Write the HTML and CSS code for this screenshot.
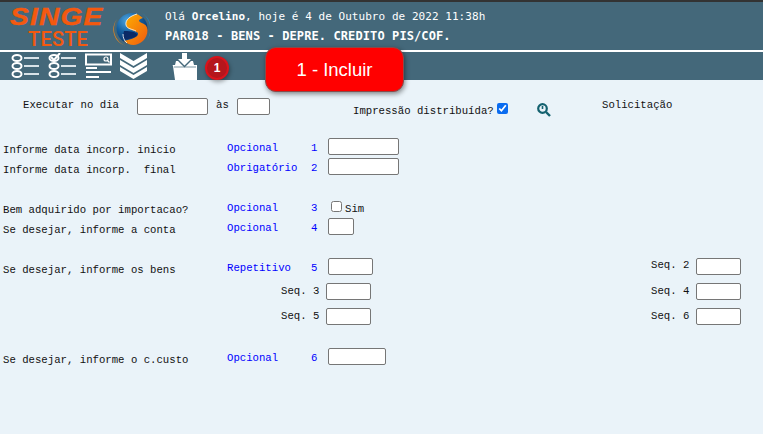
FILE: index.html
```html
<!DOCTYPE html>
<html lang="pt">
<head>
<meta charset="utf-8">
<title>PAR018</title>
<link rel="stylesheet" href="styles.css">
</head>
<body>
<header class="head">
  <div class="brand">
    <div class="brand-name">SINGE</div>
    <div class="brand-sub">TESTE</div>
  </div>
  <svg class="globe" width="38" height="38" viewBox="0 0 38 38">
    <defs>
      <radialGradient id="gb" cx="35%" cy="25%" r="80%"><stop offset="0" stop-color="#4fa6e0"/><stop offset=".5" stop-color="#145f9f"/><stop offset="1" stop-color="#0b2f66"/></radialGradient>
      <linearGradient id="go" x1="0" y1="0" x2="1" y2="1"><stop offset="0" stop-color="#ffb000"/><stop offset="1" stop-color="#ee5a10"/></linearGradient>
    </defs>
    <path d="M5 9A18 18 0 0 0 14 36A17 17 0 0 1 5 9Z" fill="#e8861e"/>
    <path d="M30 3A18 18 0 0 1 35 30A20 20 0 0 0 30 3Z" fill="#2b7fb8"/>
    <circle cx="20" cy="18.500" r="15.500" fill="url(#gb)"/>
    <path d="M25 4C18 6 13 10 14 15C15 20 23 20 26 23C27 27 20 29 12 31C16 35 22 36 26 34C32 32 35.500 26 35.500 20C35 14 31 14 28 12C26 11 27 9 31 8C29 6 27 5 25 4Z" fill="url(#go)"/>
    <path d="M12 21C16 21 22 21 25 24C26 27 20 28 12 30C11 27 11 24 12 21Z" fill="#0a2a66"/>
    <path d="M25 4C18 6 13 10 14 15C15 19 20 19 24 21M11 24C11 27 12 31 15 33" fill="none" stroke="#fff" stroke-width=".8"/>
  </svg>
  <div class="greet">
    <div class="greet-line">Olá <b>Orcelino</b>, hoje é 4 de Outubro de 2022 11:38h</div>
    <div class="greet-title">PAR018 - BENS - DEPRE. CREDITO PIS/COF.</div>
  </div>
</header>
<nav class="tools">
  <svg class="ico" width="30" height="26" viewBox="0 0 30 26" fill="none" stroke="#fff" stroke-width="2">
    <ellipse cx="6" cy="5" rx="4.500" ry="3"/><ellipse cx="6" cy="13" rx="4.500" ry="3"/><ellipse cx="6" cy="21" rx="4.500" ry="3"/>
    <path d="M13 5H28M13 13H28M13 21H28" stroke="#d8e2e8"/>
  </svg>
  <svg class="ico" width="30" height="26" viewBox="0 0 30 26" fill="none" stroke="#fff" stroke-width="2">
    <ellipse cx="6" cy="5" rx="4.500" ry="3"/><ellipse cx="6" cy="13" rx="4.500" ry="3"/><ellipse cx="6" cy="21" rx="4.500" ry="3"/>
    <path d="M3 4L6 7L12 0"/>
    <path d="M13 5H28M13 13H28M13 21H28" stroke="#d8e2e8"/>
  </svg>
  <svg class="ico" width="28" height="26" viewBox="0 0 28 26" fill="none" stroke="#fff">
    <rect x="1" y="1.500" width="25" height="10" stroke-width="2"/>
    <circle cx="21" cy="6" r="2" stroke-width="1.200"/><path d="M22.500 7.500L24.500 9.500" stroke-width="1.200"/>
    <path d="M1 15H12M1 19H26M1 24H14" stroke-width="2"/>
  </svg>
  <svg class="ico" width="27" height="26" viewBox="0 0 27 26" fill="#fff">
    <path d="M0 0L13.500 8L27 0V5L13.500 13L0 5Z"/>
    <path d="M0 7L13.500 15L27 7V12L13.500 20L0 12Z"/>
    <path d="M0 14L13.500 22L27 14V18L13.500 26L0 18Z"/>
  </svg>
  <svg class="ico ico-in" width="26" height="27" viewBox="0 0 26 27" fill="#fff">
    <path d="M10 0H15V6H19L12.500 12.500L6 6H10Z"/>
    <path d="M4 8H6L12.500 14.500L19 8H21L22 12H25V27H3L1 13L0.500 12H3Z"/>
    <path d="M2 14H24" stroke="#44687a" stroke-width=".7"/>
  </svg>
  <span class="badge">1</span>
</nav>
<div class="tip">1 - Incluir</div>
<main class="form">
  <div class="exec">
    <span class="exec-label">Executar no dia</span>
    <input class="in w71" type="text">
    <span class="as">às</span>
    <input class="in w33" type="text">
    <span class="dist">Impressão distribuída?</span>
    <input class="chk" type="checkbox" checked>
    <svg class="lens" width="14" height="14" viewBox="0 0 14 14" fill="none" stroke="#14616f">
      <circle cx="5.500" cy="5.500" r="4.300" stroke-width="2.200"/>
      <path d="M9 9L13 13" stroke-width="2.400"/>
      <path d="M5.500 3V6" stroke-width="1.600"/>
    </svg>
    <span class="sol">Solicitação</span>
  </div>

  <div class="row gap24">
    <span class="lbl">Informe data incorp. inicio</span><span class="st">Opcional</span><span class="num">1</span>
    <input class="in w71" type="text">
  </div>
  <div class="row">
    <span class="lbl">Informe data incorp.  final</span><span class="st">Obrigatório</span><span class="num">2</span>
    <input class="in w71" type="text">
  </div>

  <div class="row gap20">
    <span class="lbl">Bem adquirido por importacao?</span><span class="st">Opcional</span><span class="num">3</span>
    <input class="chk chk-sim" type="checkbox"><span class="sim">Sim</span>
  </div>
  <div class="row">
    <span class="lbl">Se desejar, informe a conta</span><span class="st">Opcional</span><span class="num">4</span>
    <input class="in w26" type="text">
  </div>

  <div class="row gap20">
    <span class="lbl">Se desejar, informe os bens</span><span class="st">Repetitivo</span><span class="num">5</span>
    <input class="in w45" type="text">
    <span class="seq seq-r">Seq. 2</span><input class="in w45" type="text">
  </div>
  <div class="row row-seq gap5">
    <span class="seq seq-l">Seq. 3</span><input class="in w45" type="text">
    <span class="seq seq-m">Seq. 4</span><input class="in w45" type="text">
  </div>
  <div class="row row-seq gap8">
    <span class="seq seq-l">Seq. 5</span><input class="in w45" type="text">
    <span class="seq seq-m">Seq. 6</span><input class="in w45" type="text">
  </div>

  <div class="row gap23">
    <span class="lbl">Se desejar, informe o c.custo</span><span class="st">Opcional</span><span class="num">6</span>
    <input class="in w58" type="text">
  </div>
</main>
</body>
</html>
```
FILE: styles.css
```css
* { box-sizing: border-box; }
html, body { margin: 0; padding: 0; }
body {
  width: 763px;
  height: 434px;
  overflow: hidden;
  position: relative;
  background: #eaf3f9;
  font-family: "Liberation Mono", monospace;
  font-size: 10.67px;
  color: #111;
}
.head {
  height: 52px;
  display: flex;
  background: #44687a;
  border-top: 2px solid #333;
  border-bottom: 2px solid #fff;
}
.brand { width: 112px; padding-left: 10px; color: #f4590f; font-family: "Liberation Sans", sans-serif; }
.brand-name {
  margin-top: 4px;
  height: 22px;
  font: italic 700 23px/22px "Liberation Sans", sans-serif;
  letter-spacing: 1px;
  -webkit-text-stroke: .4px #f4590f;
  transform-origin: 0 0;
  transform: scaleX(1.22);
}
.brand-sub {
  margin: 1px 0 0 18px;
  font: 500 20px/20px Roboto, sans-serif;
  letter-spacing: 0.2px;
  color: #f4590f;
}
.globe { margin-top: 8px; flex: none; }
.greet { margin-left: 15px; padding-top: 8px; color: #fff; font-family: "DejaVu Sans Mono", monospace; }
.greet-line { font-size: 11px; line-height: 14px; height: 19px; letter-spacing: .05px; }
.greet-title { font-size: 12px; line-height: 14px; font-weight: 700; letter-spacing: .1px; }
.tools {
  height: 28px;
  display: flex;
  background: #44687a;
  padding: 1px 0 0 11px;
}
.ico { flex: none; margin-right: 7px; }
.ico-in { margin: 0 0 0 18px; }
.badge {
  flex: none;
  width: 24px;
  height: 24px;
  margin: 3px 0 0 7px;
  border-radius: 50%;
  background: #b5161c;
  border: 2px solid #d9141c;
  box-shadow: 1px 2px 4px rgba(0,0,0,.35);
  color: #fff;
  font: 700 12px/20px "Liberation Sans", sans-serif;
  text-align: center;
}
.tip {
  position: absolute;
  left: 265px;
  top: 47px;
  width: 139px;
  height: 45px;
  border-radius: 11px;
  background: #f00;
  border: 1px solid #8a4a4a;
  box-shadow: 1px 2px 5px rgba(0,0,0,.45);
  color: #fff;
  font: 400 18.500px/43px "Liberation Sans", sans-serif;
  text-align: center;
}
.in {
  flex: none;
  height: 17px;
  margin: 0;
  padding: 0;
  background: #fff;
  border: 1px solid #767676;
  border-radius: 2px;
}
.w71 { width: 71px; }
.w33 { width: 33px; }
.w26 { width: 26px; }
.w45 { width: 45px; }
.w58 { width: 58px; }
.exec { display: flex; align-items: flex-start; height: 34px; padding: 18px 0 0 23px; }
.exec-label { width: 114px; line-height: 15px; }
.as { width: 29px; padding-left: 8px; line-height: 15px; }
.dist { margin: 6px 0 0 83px; width: 144px; line-height: 14px; }
.chk { flex: none; width: 11px; height: 11px; margin: 5px 0 0 0; accent-color: #0b6cf0; }
.lens { flex: none; margin: 5px 0 0 29px; }
.sol { margin-left: 51px; line-height: 15px; }
.row { display: flex; align-items: flex-start; height: 20px; padding-left: 3px; }
.row span { line-height: 20px; }
.row-seq { padding-left: 281px; height: 17px; }
.row .seq { flex: none; line-height: 15px; }
.row-seq .seq { line-height: 17px; }
.gap24 { margin-top: 24px; }
.gap23 { margin-top: 23px; }
.gap20 { margin-top: 20px; }
.gap8 { margin-top: 8px; }
.gap5 { margin-top: 5px; }
.lbl { width: 224px; white-space: pre; padding-top: 2px; }
.st { width: 84px; color: #00f; }
.num { width: 17px; color: #00f; }
.chk-sim { margin: 3px 0 0 3px; }
.sim { margin-left: 3px; }
.row .sim { line-height: 22px; }
.seq-l { width: 45px; }
.seq-r { margin-left: 278px; width: 45px; }
.seq-m { margin-left: 280px; width: 45px; }
```
